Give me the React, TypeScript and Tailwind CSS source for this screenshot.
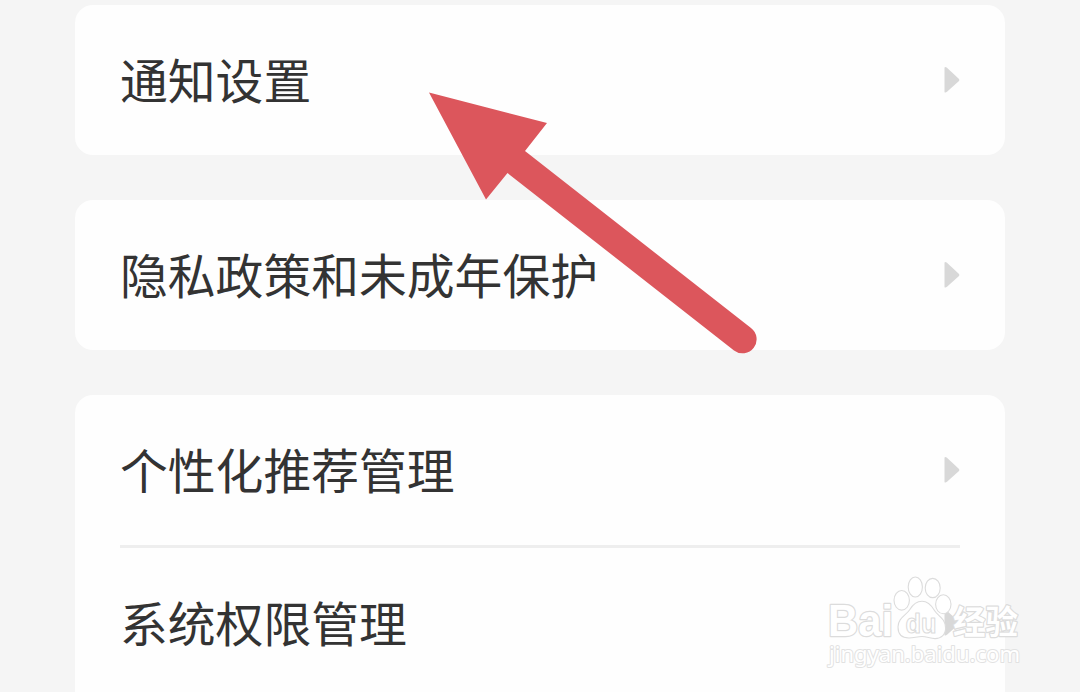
interface SettingRowProps {
  label: string;
}

function SettingRow({ label }: SettingRowProps) {
  return (
    <div className="flex h-[150px] items-center justify-between px-[45px]">
      <span className="pt-[6px] text-[47.8px] leading-[60px] text-[#333333]">{label}</span>
      <svg className="h-[28px] w-[16px] shrink-0" viewBox="0 0 16 28" fill="#d8d8d8">
        <path d="M.5 1.5Q1.5.5 3 1.8L15 13Q15.8 14 15 15L3 25.8Q1.5 27 .5 26.2Z" />
      </svg>
    </div>
  );
}

function SettingCard({ labels }: { labels: string[] }) {
  return (
    <section className="rounded-[18px] bg-[#fefefe] last:pb-[45px]">
      {labels.map((label, i) => (
        <div key={label}>
          {i > 0 && <div className="mx-[45px] h-[3px] bg-[#eeeeee]" />}
          <SettingRow label={label} />
        </div>
      ))}
    </section>
  );
}

function Arrow() {
  return (
    <svg className="absolute left-[420px] top-[80px] h-[290px] w-[350px]" viewBox="420 80 350 290">
      <path
        d="M429 92.5L547 123L525 151L751 328A14 14 0 0 1 734 350.5L507.5 173L486 199.5Z"
        fill="#dc565c"
      />
    </svg>
  );
}

function Watermark() {
  return (
    <svg
      className="absolute left-[820px] top-[565px] h-[120px] w-[220px]"
      viewBox="820 565 220 120"
      fill="#ffffff"
      stroke="#dcdcdc"
      strokeWidth="1.1"
      strokeLinejoin="round"
    >
      <ellipse cx="901.7" cy="600.3" rx="7.7" ry="9.8" />
      <ellipse cx="915.3" cy="587" rx="7.1" ry="10" />
      <ellipse cx="932.7" cy="588" rx="7.5" ry="9.6" />
      <ellipse cx="943.3" cy="604.3" rx="7.7" ry="9.5" />
      <path d="M922 601.3C928 601.3 931.5 605.5 934.5 610.5C937.5 615.5 945.6 618.5 945.6 628C945.6 635 941 638.6 935 638.6C930 638.6 927 636.5 922 636.5C917 636.5 914 638 909 638C902 638 898 634 898 627C898 618 906 615.5 909.5 610C912.5 605 916 601.3 922 601.3Z" />
      <g strokeWidth="2.4" paintOrder="stroke" className="font-bold">
        <text x="828" y="636" fontSize="43.5" textLength="65" lengthAdjust="spacingAndGlyphs">Bai</text>
        <text x="953" y="633.5" fontSize="33" textLength="65" lengthAdjust="spacingAndGlyphs">经验</text>
      </g>
      <text x="905.5" y="632.5" fontSize="27" fontWeight="700" textLength="31" lengthAdjust="spacingAndGlyphs">du</text>
      <text
        x="829"
        y="661.5"
        fontSize="22"
        stroke="#e2e2e2"
        strokeWidth="2"
        paintOrder="stroke"
        textLength="191"
        lengthAdjust="spacingAndGlyphs"
        className="font-['Noto_Sans',sans-serif]"
      >
        jingyan.baidu.com
      </text>
    </svg>
  );
}

export default function App() {
  return (
    <main className="relative h-[692px] w-full overflow-hidden bg-[#f5f5f5] font-['Liberation_Sans','Noto_Sans_CJK_SC',sans-serif]">
      <div className="flex flex-col gap-[45px] px-[75px] pt-[5px]">
        <SettingCard labels={['通知设置']} />
        <SettingCard labels={['隐私政策和未成年保护']} />
        <SettingCard labels={['个性化推荐管理', '系统权限管理']} />
      </div>
      <Arrow />
      <Watermark />
    </main>
  );
}
